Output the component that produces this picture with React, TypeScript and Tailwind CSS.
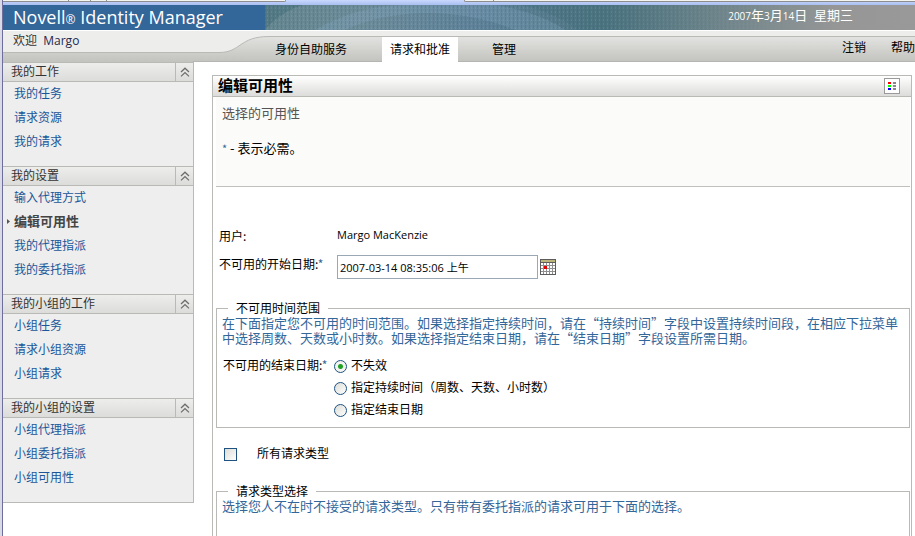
import React, { useState } from 'react';
import clsx from 'clsx';

interface MenuSection {
  title: string;
  items: string[];
}

const sections: MenuSection[] = [
  { title: '我的工作', items: ['我的任务', '请求资源', '我的请求'] },
  { title: '我的设置', items: ['输入代理方式', '编辑可用性', '我的代理指派', '我的委托指派'] },
  { title: '我的小组的工作', items: ['小组任务', '请求小组资源', '小组请求'] },
  { title: '我的小组的设置', items: ['小组代理指派', '小组委托指派', '小组可用性'] },
];

const tabs = ['身份自助服务', '请求和批准', '管理'];
const endOptions = ['不失效', '指定持续时间（周数、天数、小时数）', '指定结束日期'];

const ACTIVE_ITEM = '编辑可用性';

const LATIN = "font-['Open_Sans','Noto_Sans_CJK_SC',sans-serif]";

const CollapseIcon = () => (
  <svg width="10" height="10" viewBox="0 0 10 10" fill="none" stroke="#6e6e6e" strokeWidth="1.3">
    <path d="M1 5 5 1.2 9 5" />
    <path d="M1 9.4 5 5.6 9 9.4" />
  </svg>
);

const LegendIcon = () => (
  <svg width="16" height="16" viewBox="0 0 16 16" shapeRendering="crispEdges">
    <rect width="16" height="16" fill="#9a9a9a" />
    <rect x="1" y="1" width="14" height="14" fill="#fff" />
    <rect x="4" y="4" width="3" height="2" fill="#f00" />
    <rect x="4" y="7" width="3" height="2" fill="#0f0" />
    <rect x="4" y="10" width="3" height="2" fill="#00f" />
    <rect x="9" y="4" width="3" height="2" fill="#888" />
    <rect x="9" y="7" width="3" height="2" fill="#888" />
    <rect x="9" y="10" width="3" height="2" fill="#888" />
  </svg>
);

const CalendarIcon = () => (
  <svg width="16" height="16" viewBox="0 0 16 16" shapeRendering="crispEdges">
    <rect width="16" height="16" fill="#5c5c5c" />
    <rect x="1" y="1" width="14" height="2" fill="#bdb67c" />
    <rect x="1" y="4" width="14" height="11" fill="#8f8f8f" />
    {[4, 7, 10, 13].map((y) =>
      [1, 4, 7, 10, 13].map((x) => <rect key={`${x}-${y}`} x={x} y={y} width="2" height="2" fill="#fff" />)
    )}
    <rect x="4" y="7" width="3" height="3" fill="#e00000" />
  </svg>
);

// Woven blue-grey backdrop with two faint rings
const BannerArt = () => (
  <svg className="absolute inset-0 h-full w-full" viewBox="0 0 650 25" preserveAspectRatio="none">
    <defs>
      <linearGradient id="bannerFade">
        <stop offset="0" stopColor="#64868f" />
        <stop offset="0.15" stopColor="#6d8c9a" />
        <stop offset="0.32" stopColor="#5f8299" />
        <stop offset="0.52" stopColor="#4f7683" />
        <stop offset="0.7" stopColor="#70868c" />
        <stop offset="0.88" stopColor="#969696" />
        <stop offset="1" stopColor="#999999" />
      </linearGradient>
      <linearGradient id="weaveFade">
        <stop offset="0.5" stopColor="#fff" />
        <stop offset="0.82" stopColor="#000" />
      </linearGradient>
      <linearGradient id="cornerFade">
        <stop offset="0.2" stopColor="#2f6069" stopOpacity="0.2" />
        <stop offset="1" stopColor="#2f6069" stopOpacity="0" />
      </linearGradient>
      <mask id="weaveMask">
        <rect width="650" height="25" fill="url(#weaveFade)" />
      </mask>
      <pattern id="weave" width="4" height="4" patternUnits="userSpaceOnUse">
        <rect x="0" y="0" width="1" height="3" fill="#2f5563" fillOpacity="0.2" />
        <rect x="2" y="2" width="1" height="2" fill="#b9cdd6" fillOpacity="0.14" />
      </pattern>
    </defs>
    <rect width="650" height="25" fill="url(#bannerFade)" />
    <path d="M0 0H38C22 5 10 13 0 25Z" fill="#47727f" fillOpacity="0.6" />
    <path d="M50 25C80 8 110 0 140 0H230C260 5 285 14 300 25H250C225 14 190 8 165 8C130 8 100 15 80 25Z" fill="#8fb0cc" fillOpacity="0.22" />
    <path d="M255 0C278 5 300 14 312 25H460V0Z" fill="url(#cornerFade)" />
    <rect width="650" height="25" fill="url(#weave)" mask="url(#weaveMask)" />
  </svg>
);

// Swoosh joining the welcome area to the tab strip
const TabCurve = () => (
  <svg className="absolute inset-0" width="272" height="31" viewBox="0 0 272 31">
    <defs>
      <linearGradient id="stripFill" x1="0" y1="5" x2="0" y2="31" gradientUnits="userSpaceOnUse">
        <stop offset="0" stopColor="#e2e3e0" />
        <stop offset="1" stopColor="#c2c3be" />
      </linearGradient>
    </defs>
    <path d="M0 21.5H216C238 21.5 236 5.5 266 5.5H272V31H0Z" fill="url(#stripFill)" />
    <path d="M0 21.5H216C238 21.5 236 5.5 266 5.5H272" fill="none" stroke="#b9bab5" />
    <path d="M190 30.5H272" stroke="#b5b6b1" />
  </svg>
);

// Lower edge of the window chrome above the page
const ChromeEdge = () => (
  <div className="flex h-[5px] shrink-0 bg-linear-to-b from-[#c9d8fd] to-[#a9bff0] pb-[3px]">
    <div className="flex w-[283px] rounded-br-sm border-r border-b border-[#8d8d8d] bg-[#f4f4f0]">
      <div className="w-[66px] border-r border-[#8d8d8d]" />
      <div className="w-[22px] border-r border-[#8d8d8d]" />
      <div className="w-4 border-r border-[#8d8d8d]" />
    </div>
    <div className="ml-[178px] flex-1 rounded-bl-sm border-b border-l border-[#8d8d8d] bg-[#f4f4f0]">
      <div className="h-full w-[29px] border-r border-[#8d8d8d]" />
    </div>
  </div>
);

const Banner = () => (
  <header className="flex h-[26px] border-b border-white bg-[#336699] text-white">
    <h1 className={clsx('w-[262px] shrink-0 pl-2.5 text-[18px] leading-[25px] whitespace-nowrap', LATIN)}>
      Novell<span className="text-xs">®</span> Identity Manager
    </h1>
    <div className="relative flex-1">
      <BannerArt />
      <p className={clsx('relative pr-[62px] text-right text-[13px] leading-[21px] whitespace-nowrap', LATIN)}>
        <span className="text-[10px]">2007</span>年<span className="text-[10px]">3</span>月
        <span className="text-[10px]">14</span>日&nbsp; 星期三
      </p>
    </div>
  </header>
);

const TabBar = () => {
  const [active, setActive] = useState('请求和批准');

  return (
    <div className="flex h-[31px] bg-[#ededeb] text-xs">
      <div className="relative w-[272px] shrink-0">
        <TabCurve />
        <p className={clsx('relative pl-2.5 leading-5 text-[#333]', LATIN)}>
          欢迎&nbsp; <span className="text-[#1f2a50]">Margo</span>
        </p>
      </div>
      <div className="mt-[5px] flex flex-1 items-start justify-between border-t border-[#b9bab5] bg-linear-to-b from-[#e2e3e0] to-[#c2c3be] shadow-[inset_0_-1px_0_#b5b6b1]">
        <nav className="flex">
          {tabs.map((tab) => (
            <button
              key={tab}
              onClick={() => setActive(tab)}
              className={clsx(
                'h-[25px] pb-0.5 first:pr-[35px] first:pl-0',
                tab === active ? 'bg-white px-2' : 'px-[34px]'
              )}
            >
              {tab}
            </button>
          ))}
        </nav>
        <div className="flex gap-[25px] leading-5">
          <a href="#logout">注销</a>
          <a href="#help">帮助</a>
        </div>
      </div>
    </div>
  );
};

const Sidebar = () => {
  const [closed, setClosed] = useState<string[]>([]);

  const toggle = (title: string) => {
    setClosed((prev) => (prev.includes(title) ? prev.filter((t) => t !== title) : [...prev, title]));
  };

  return (
    <aside className="w-[191px] shrink-0 self-start border-r border-b border-[#b9bab5] bg-[#eeeeee] text-xs">
      {sections.map((section) => (
        <section key={section.title}>
          <div className="flex h-5 border-y border-[#b9bab5] bg-linear-to-b from-[#ededeb] to-[#dcddda]">
            <h2 className="flex-1 pl-2 leading-4 text-[#333]">{section.title}</h2>
            <button
              aria-label={section.title}
              onClick={() => toggle(section.title)}
              className="flex w-[18px] items-center justify-center border-l border-[#b9bab5]"
            >
              <CollapseIcon />
            </button>
          </div>
          {!closed.includes(section.title) && (
            <ul className="pb-3">
              {section.items.map((item) => (
                <li key={item} className="flex h-6 items-center pb-0.5">
                  <span className="flex w-[11px] justify-center">
                    {item === ACTIVE_ITEM && (
                      <svg width="3" height="5" viewBox="0 0 3 5">
                        <path d="M0 0 3 2.5 0 5Z" fill="#555" />
                      </svg>
                    )}
                  </span>
                  <a
                    href="#item"
                    className={item === ACTIVE_ITEM ? 'text-[13px] font-bold text-[#444]' : 'text-[#1a5699]'}
                  >
                    {item}
                  </a>
                </li>
              ))}
            </ul>
          )}
        </section>
      ))}
    </aside>
  );
};

const Required = () => <span className="text-[#336699]">*</span>;

const AvailabilityForm = () => {
  const [startDate, setStartDate] = useState('2007-03-14 08:35:06 上午');
  const [endOption, setEndOption] = useState(endOptions[0]);
  const [allTypes, setAllTypes] = useState(false);

  return (
    <form className="flex flex-1 flex-col pr-px pl-[3px] text-xs">
      <div className="h-[90px] border-b border-[#c0c1bc] bg-[#fbfbf9] pl-1.5">
        <p className="pt-2 text-[13px] leading-4 text-[#555]">选择的可用性</p>
        <p className="pt-[19px] text-[13px] leading-4">
          <span className="text-[11px] text-[#336699]">*</span> - 表示必需。
        </p>
      </div>

      <div className="mt-10 grid grid-cols-[118px_1fr] gap-y-2 pl-[3px]">
        <span className="leading-[18px]">用户:</span>
        <span className={clsx('h-5 text-[11px] leading-4', LATIN)}>Margo MacKenzie</span>
        <label htmlFor="start" className="leading-[18px] whitespace-nowrap">
          不可用的开始日期:<Required />
        </label>
        <div className="flex items-center gap-0.5">
          <input
            id="start"
            value={startDate}
            onChange={(e) => setStartDate(e.target.value)}
            className={clsx('h-6 w-[201px] border border-[#9aa7b4] bg-white px-0.5 text-[11px] outline-none', LATIN)}
          />
          <button type="button" aria-label="日期">
            <CalendarIcon />
          </button>
        </div>
      </div>

      <fieldset className="mt-[22px] border border-[#b9bab5] pb-1.5 pl-[5px]">
        <legend className="ml-1.5 px-2 leading-[14px]">不可用时间范围</legend>
        <p className="text-[13px] leading-[15px] text-[#336699]">
          在下面指定您不可用的时间范围。如果选择指定持续时间，请在“持续时间”字段中设置持续时间段，在相应下拉菜单中选择周数、天数或小时数。如果选择指定结束日期，请在“结束日期”字段设置所需日期。
        </p>
        <div className="flex pt-2.5">
          <span className="w-28 pl-px leading-5 whitespace-nowrap">
            不可用的结束日期:<Required />
          </span>
          <div>
            {endOptions.map((option) => (
              <label key={option} className="flex h-[22px] items-center gap-1">
                <input
                  type="radio"
                  name="end"
                  checked={endOption === option}
                  onChange={() => setEndOption(option)}
                  className="h-[13px] w-[13px] appearance-none rounded-full border border-[#1d5281] bg-linear-to-br from-[#dcdcd7] to-white checked:bg-[radial-gradient(circle,#21a121_0_2px,#f4f4f1_3px)]"
                />
                <span className="pb-0.5">{option}</span>
              </label>
            ))}
          </div>
        </div>
      </fieldset>

      <label className="mt-4 flex h-5 items-center gap-5 pl-2">
        <input
          type="checkbox"
          checked={allTypes}
          onChange={(e) => setAllTypes(e.target.checked)}
          className="h-[13px] w-[13px] appearance-none border border-[#1d5281] bg-linear-to-br from-[#dcdcd7] to-white checked:bg-none checked:bg-[#21a121]"
        />
        <span className="pb-0.5">所有请求类型</span>
      </label>

      <fieldset className="mt-5 flex-1 border border-b-0 border-[#b9bab5] pl-[5px]">
        <legend className="ml-1.5 px-2 leading-[14px]">请求类型选择</legend>
        <p className="text-[13px] leading-[15px] text-[#336699]">
          选择您人不在时不接受的请求类型。只有带有委托指派的请求可用于下面的选择。
        </p>
      </fieldset>
    </form>
  );
};

export default function App() {
  return (
    <div
      lang="zh-CN"
      className="flex min-h-screen overflow-hidden border-l-2 border-[#dadae6] bg-white font-['Noto_Sans_CJK_SC',sans-serif] text-black"
    >
      <div className="flex min-w-0 flex-1 flex-col border-l border-[#6e6e9c]">
        <ChromeEdge />
        <Banner />
        <TabBar />
        <div className="flex flex-1">
          <Sidebar />
          <main className="mt-[13px] mr-[3px] ml-[18px] flex flex-1 flex-col border-x border-t border-[#b9bab5]">
            <div className="flex h-[21px] items-center justify-between border-b border-[#b9bab5] bg-linear-to-b from-white to-[#dcddda] pr-[11px] pl-[5px]">
              <h2 className="pb-0.5 text-[15px] leading-[18px] font-bold">编辑可用性</h2>
              <button aria-label="图例">
                <LegendIcon />
              </button>
            </div>
            <AvailabilityForm />
          </main>
        </div>
      </div>
    </div>
  );
}
